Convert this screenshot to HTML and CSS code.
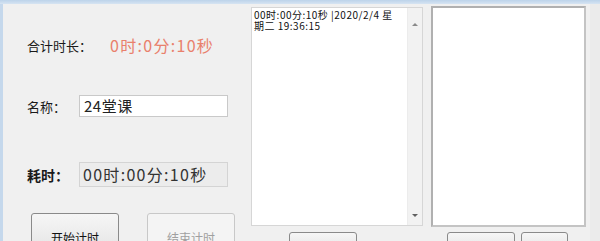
FILE: index.html
```html
<!DOCTYPE html>
<html>
<head>
<meta charset="utf-8">
<link rel="stylesheet" href="styles.css">
</head>
<body>
<div class="window">
  <div class="frame-top"></div>
  <div class="main">
    <div class="frame-left"></div>
    <div class="left-panel">
      <div class="row total-row">
        <span class="label">合计时长：</span>
        <span class="total-value">0时:0分:10秒</span>
      </div>
      <div class="row name-row">
        <span class="label">名称：</span>
        <div class="input">24堂课</div>
      </div>
      <div class="row used-row">
        <span class="label bold">耗时：</span>
        <div class="readonly">00时:00分:10秒</div>
      </div>
      <div class="btn-row">
        <div class="btn start">开始计时</div>
        <div class="btn disabled">结束计时</div>
      </div>
    </div>
    <div class="mid-col">
      <div class="listbox">
        <div class="list-text">00时:00分:10秒 |2020/2/4 星期二 19:36:15</div>
        <div class="scrollbar">
          <span class="arrow up"></span>
          <span class="arrow down"></span>
        </div>
      </div>
      <div class="mid-btns">
        <div class="btn small wide"></div>
      </div>
    </div>
    <div class="right-col">
      <div class="rbox"></div>
      <div class="right-btns">
        <div class="btn small wide"></div>
        <div class="btn small narrow"></div>
      </div>
    </div>
    <div class="right-edge"></div>
  </div>
</div>
</body>
</html>
```

FILE: styles.css
```css
html, body {
  margin: 0;
  padding: 0;
  width: 600px;
  height: 241px;
  overflow: hidden;
  background: #f0f0f0;
  font-family: "Noto Sans CJK SC", "Noto Sans", sans-serif;
}
.window {
  width: 600px;
  height: 241px;
  display: flex;
  flex-direction: column;
}
.frame-top {
  height: 4px;
  background: linear-gradient(#bcd3ea, #d6e4f2);
  flex: none;
}
.main {
  flex: 1;
  display: flex;
}
.frame-left {
  width: 3px;
  background: #c5d8ec;
  flex: none;
}
.left-panel {
  width: 248px;
  flex: none;
  padding-left: 24px;
  box-sizing: border-box;
  display: flex;
  flex-direction: column;
}
.row {
  display: flex;
  align-items: center;
}
.label {
  font-size: 13px;
  color: #1a1a1a;
  width: 52px;
  white-space: nowrap;
}
.label.bold {
  font-weight: bold;
  font-size: 14px;
}
.total-row {
  margin-top: 31px;
  height: 20px;
}
.total-value {
  margin-left: 31px;
  color: #e9806c;
  font-size: 16px;
  letter-spacing: 1.3px;
}
.name-row {
  margin-top: 40px;
}
.input {
  width: 149px;
  height: 22px;
  box-sizing: border-box;
  background: #fff;
  border: 1px solid #c9c9c9;
  font-size: 15px;
  color: #222;
  padding-left: 4px;
  line-height: 20px;
  letter-spacing: 0.5px;
}
.used-row {
  margin-top: 45px;
}
.readonly {
  width: 149px;
  height: 25px;
  box-sizing: border-box;
  background: #ececec;
  border: 1px solid #d4d4d4;
  font-size: 16px;
  color: #333;
  padding-left: 3px;
  line-height: 23px;
  letter-spacing: 1.3px;
}
.btn-row {
  margin-top: 26px;
  display: flex;
  gap: 28px;
  padding-left: 4px;
}
.btn {
  box-sizing: border-box;
  border: 1px solid #8a8a8a;
  border-radius: 3px;
  background: linear-gradient(#f6f6f6, #e4e4e4);
  font-size: 12px;
  color: #111;
  text-align: center;
}
.btn.start {
  width: 88px;
  height: 40px;
  padding-top: 15px;
}
.btn.disabled {
  width: 88px;
  height: 40px;
  padding-top: 15px;
  border-color: #c8c8c8;
  background: #f4f4f4;
  color: #a0a0a0;
}
.mid-col {
  width: 172px;
  flex: none;
  display: flex;
  flex-direction: column;
}
.listbox {
  margin-top: 3px;
  height: 219px;
  box-sizing: border-box;
  border: 1px solid #d6d6d6;
  background: #fff;
  display: flex;
}
.list-text {
  flex: 1;
  font-family: "Noto Sans CJK SC", "DejaVu Sans", sans-serif;
  font-size: 10px;
  line-height: 11px;
  letter-spacing: 0.5px;
  color: #111;
  padding: 1px 8px 0 2px;
  word-break: break-all;
}
.scrollbar {
  width: 15px;
  flex: none;
  background: #f2f2f2;
  border-left: 1px solid #ececec;
  display: flex;
  flex-direction: column;
  justify-content: space-between;
  align-items: center;
  padding: 15px 0 8px;
  box-sizing: border-box;
}
.arrow {
  width: 0;
  height: 0;
  border-left: 3px solid transparent;
  border-right: 3px solid transparent;
}
.arrow.up {
  border-bottom: 3px solid #8a8a8a;
}
.arrow.down {
  border-top: 3px solid #606060;
}
.mid-btns {
  margin-top: 6px;
  padding-left: 38px;
}
.btn.small {
  height: 20px;
}
.btn.wide {
  width: 68px;
}
.btn.narrow {
  width: 47px;
}
.right-col {
  margin-left: 8px;
  width: 155px;
  flex: none;
  display: flex;
  flex-direction: column;
}
.rbox {
  margin-top: 2px;
  height: 221px;
  box-sizing: border-box;
  background: #fff;
  border: 2px solid #b0b0b0;
  border-right-color: #c4c4c4;
  border-bottom-color: #c4c4c4;
}
.right-btns {
  margin-top: 5px;
  padding-left: 16px;
  display: flex;
  gap: 6px;
}
.right-edge {
  flex: 1;
  margin-left: 4px;
  background: #ebebeb;
}
```
